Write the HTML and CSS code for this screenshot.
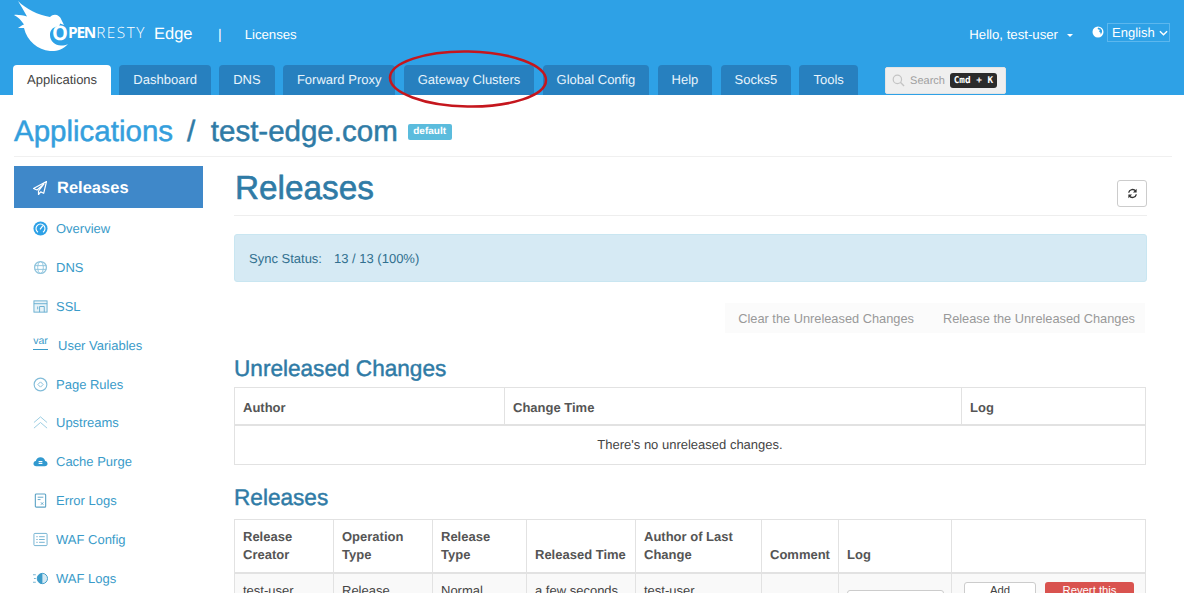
FILE: index.html
```html
<!DOCTYPE html>
<html lang="en">
<head>
<meta charset="utf-8">
<title>Releases - OpenResty Edge</title>
<link rel="stylesheet" href="styles.css">
</head>
<body>
<header class="topbar">
  <div class="brand-row">
    <a class="logo">
      <svg class="bird" viewBox="0 0 70 54" width="70" height="54" aria-hidden="true">
        <path fill="#fff" d="M18 1C26 9 38 15 50 17C54 13 60 15 61.500 20L64 25L60 23.500C60 25 59 26 58 26.500C52 27 50 31 50 35C50 41 55 45.500 61 45.500C64 45.500 66 45 68 44C63 50 56 51.500 50 51C38 50 27 41 24 28L18 28C21 26 22 25 24 24.500C21 20 18 17 14 15C18 14.500 23 15.500 27 16.500C24 11 21 6 18 1Z"/>
      </svg>
      <span class="logo-text"><b class="logo-o">O</b><b class="logo-pen">PEN</b><span class="logo-resty">RESTY</span></span>
      <span class="logo-edge">Edge</span>
    </a>
    <span class="divider">|</span>
    <a class="licenses">Licenses</a>
    <div class="user-area">
      <span class="hello">Hello, test-user</span>
      <span class="caret"></span>
      <svg class="globe" viewBox="0 0 12 12" width="12" height="12" aria-hidden="true">
        <circle cx="6" cy="6" r="5.500" fill="#fff"/>
        <path fill="#2ea1e6" d="M6.500 1.500C5.500 2 5.400 2.800 6 3.200C6.800 3.600 7.400 3.400 7.700 4C7.800 4.600 7 4.800 7.200 5.400C7.500 6 8.400 6.200 8.600 7C8.700 7.500 8.400 8 8.700 8.400C9.800 7.400 10.300 6 10 4.600C9.600 3 8.200 1.800 6.500 1.500Z"/>
      </svg>
      <span class="lang">English<svg class="chev" viewBox="0 0 10 6" width="9" height="6" aria-hidden="true"><path d="M1 1l4 4 4-4" fill="none" stroke="#fff" stroke-width="1.600"/></svg></span>
    </div>
  </div>
  <nav class="tabs">
    <a class="tab active">Applications</a>
    <a class="tab">Dashboard</a>
    <a class="tab">DNS</a>
    <a class="tab">Forward Proxy</a>
    <a class="tab">Gateway Clusters</a>
    <a class="tab">Global Config</a>
    <a class="tab">Help</a>
    <a class="tab">Socks5</a>
    <a class="tab">Tools</a>
    <div class="search">
      <svg viewBox="0 0 14 14" width="13" height="13" aria-hidden="true"><circle cx="5.800" cy="5.800" r="4.500" fill="none" stroke="#c4c4c4" stroke-width="1.300"/><path d="M9 9l4 4" stroke="#c4c4c4" stroke-width="1.500"/></svg>
      <span class="search-label">Search</span>
      <kbd class="shortcut">Cmd + K</kbd>
    </div>
  </nav>
</header>
<svg class="annotation" viewBox="0 0 170 64" width="170" height="64" aria-hidden="true">
  <ellipse cx="85" cy="32" rx="78" ry="27.500" fill="none" stroke="#c5161d" stroke-width="2.500" transform="rotate(1 85 32)"/>
</svg>

<div class="crumbs">
  <a class="crumb-root">Applications</a>
  <span class="crumb-sep">/</span>
  <a class="crumb-app">test-edge.com</a>
  <span class="badge">default</span>
</div>

<div class="layout">
  <aside class="sidebar">
    <a class="side-active">
      <svg viewBox="0 0 14 14" width="14" height="14" aria-hidden="true"><path d="M13.500.5L.5 7.500l3.500 1.500L11 3 5.500 10v3.500l2.200-2.600 3 1.400z" fill="none" stroke="#fff" stroke-width="1.200" stroke-linejoin="round"/></svg>
      <span>Releases</span>
    </a>
    <a class="side-item"><svg viewBox="0 0 16 16" width="15" height="15"><circle cx="8" cy="8" r="7.500" fill="#2ea1e6"/><path d="M5.300 12A4.800 4.800 0 1 1 10.700 12" fill="none" stroke="#fff" stroke-width="1.200"/><path d="M7.500 9l3-4" stroke="#fff" stroke-width="1.300"/></svg><span>Overview</span></a>
    <a class="side-item"><svg viewBox="0 0 16 16" width="15" height="15"><g fill="none" stroke="#8fc4dd"><circle cx="8" cy="8" r="6.300" stroke-width="1.400"/><ellipse cx="8" cy="8" rx="3" ry="6.300"/><path d="M1.800 6h12.400M1.800 10h12.400"/></g></svg><span>DNS</span></a>
    <a class="side-item"><svg viewBox="0 0 16 16" width="15" height="15"><g fill="none" stroke="#67aed0"><rect x="1" y="2" width="14" height="12" fill="#e8f3f8"/><path d="M1 5h14M7 14V8h5v6M5 8v3"/></g></svg><span>SSL</span></a>
    <a class="side-item var-item"><span class="var-icon">var</span><span>User Variables</span></a>
    <a class="side-item"><svg viewBox="0 0 16 16" width="15" height="15"><g fill="none" stroke="#80bbd8"><circle cx="8" cy="8" r="6.800" stroke-width="1.200"/><path d="M8 5.200L10.800 8 8 10.800 5.200 8z"/></g></svg><span>Page Rules</span></a>
    <a class="side-item"><svg viewBox="0 0 16 16" width="15" height="15"><path d="M1 8l7-6 7 6M1 14l7-6 7 6" fill="none" stroke="#94cae0" stroke-width="1"/></svg><span>Upstreams</span></a>
    <a class="side-item"><svg viewBox="0 0 16 16" width="15" height="15"><path fill="#3199cf" d="M3.500 13C1.500 13 .5 11.700.5 10.300.5 8.800 1.600 7.700 3 7.500 3.500 5 5.500 3.500 8 3.500s4.500 1.500 5 4c1.400.2 2.500 1.300 2.500 2.800 0 1.400-1 2.700-3 2.700z"/><path d="M6 8h4M6 10h4" stroke="#fff" stroke-width="1.200"/></svg><span>Cache Purge</span></a>
    <a class="side-item"><svg viewBox="0 0 16 16" width="15" height="15"><g fill="none" stroke="#5ea4c6"><rect x="2.500" y="1" width="11" height="14" rx="1" stroke-width="1.200"/><path d="M5 4.500h6M5 7h3M8.500 10l2.500 2.500M11 10l-2.500 2.500"/></g></svg><span>Error Logs</span></a>
    <a class="side-item"><svg viewBox="0 0 16 16" width="15" height="15"><g fill="none" stroke="#6fb0d0"><rect x="1" y="1.500" width="14" height="13" rx="1"/><path d="M3.500 5h1.500M6.500 5h6M3.500 8h1.500M6.500 8h6M3.500 11h1.500M6.500 11h6"/></g></svg><span>WAF Config</span></a>
    <a class="side-item"><svg viewBox="0 0 16 16" width="15" height="15"><path d="M0 4h3M1 8h2M0 12h3" stroke="#6fb0d0"/><circle cx="10" cy="8" r="5.500" fill="#d4e9f3" stroke="#3b9bc9"/><path d="M10 2.500a5.500 5.500 0 0 0 0 11z" fill="#3b9bc9"/></svg><span>WAF Logs</span></a>
  </aside>

  <main class="content">
    <div class="page-head">
      <h1 class="page-title">Releases</h1>
      <button class="refresh" type="button" aria-label="Refresh">
        <svg viewBox="0 0 12 12" width="11" height="11"><g fill="none" stroke="#333" stroke-width="1.500"><path d="M1.800 5A4.300 4.300 0 0 1 9.500 3.500"/><path d="M10.200 7A4.300 4.300 0 0 1 2.500 8.500"/></g><path fill="#333" d="M10.500.8v4h-4zM1.500 11.200v-4h4z"/></svg>
      </button>
    </div>

    <div class="sync"><span class="sync-label">Sync Status:</span><span>13 / 13 (100%)</span></div>

    <div class="actions">
      <button class="ghost ghost-clear" type="button">Clear the Unreleased Changes</button>
      <button class="ghost ghost-release" type="button">Release the Unreleased Changes</button>
    </div>

    <h2 class="section-first">Unreleased Changes</h2>
    <table class="data grid-a">
      <thead><tr><th class="a1">Author</th><th class="a2">Change Time</th><th>Log</th></tr></thead>
      <tbody><tr><td colspan="3" class="empty">There's no unreleased changes.</td></tr></tbody>
    </table>

    <h2 class="section-next">Releases</h2>
    <table class="data grid-b">
      <thead>
        <tr>
          <th class="b1">Release<br>Creator</th>
          <th class="b2">Operation<br>Type</th>
          <th class="b3">Release<br>Type</th>
          <th class="b4">Released Time</th>
          <th class="b5">Author of Last<br>Change</th>
          <th class="b6">Comment</th>
          <th class="b7">Log</th>
          <th></th>
        </tr>
      </thead>
      <tbody>
        <tr class="stripe">
          <td>test-user</td>
          <td>Release</td>
          <td>Normal</td>
          <td>a few seconds</td>
          <td>test-user</td>
          <td></td>
          <td><button class="btn-log" type="button" aria-label="Log"></button></td>
          <td class="row-btns"><button class="btn-add" type="button">Add</button><button class="btn-revert" type="button">Revert this</button></td>
        </tr>
      </tbody>
    </table>
  </main>
</div>
</body>
</html>
```
FILE: styles.css
```css
* { box-sizing: border-box; }
html, body { margin: 0; height: 593px; overflow: hidden; background: #fff; }
body {
  position: relative;
  font-family: "Liberation Sans", Arial, sans-serif;
  font-size: 13px;
  color: #444;
  text-rendering: geometricPrecision;
}

.topbar { height: 95px; background: #2ea1e6; padding: 0 14px 0 13px; display: flex; flex-direction: column; justify-content: space-between; color: #fff; }
.brand-row { display: flex; align-items: flex-start; height: 65px; }
.logo { display: flex; position: relative; width: 193px; flex: none; margin-left: -13px; }
.bird { display: block; flex: none; }
.logo-text { position: absolute; left: 52px; top: 22px; font-family: "Open Sans", sans-serif; font-size: 15.400px; line-height: 22px; white-space: nowrap; }
.logo-o { font-size: 20px; font-weight: 700; vertical-align: -2px; letter-spacing: 0; }
.logo-pen { font-weight: 700; letter-spacing: -1.200px; }
.logo-resty { font-weight: 300; letter-spacing: 1.500px; margin-left: 1px; }
.logo-edge { position: absolute; left: 154px; top: 24px; font-size: 16.500px; line-height: 20px; }
.divider { margin: 25px 0 0 25px; font-size: 14px; line-height: 18px; }
.licenses { margin: 26px 0 0 23px; font-size: 13.200px; line-height: 17px; }
.user-area { margin-left: auto; display: flex; align-items: flex-start; position: relative; }
.hello { margin-top: 26px; font-size: 13.200px; line-height: 17px; }
.caret { margin: 34px 0 0 9px; border: 3px solid transparent; border-top-color: #fff; border-bottom: 0; width: 0; height: 0; border-left-width: 3.500px; border-right-width: 3.500px; }
.globe { margin: 26px 0 0 19px; }
.lang { margin: 23px 0 0 3px; height: 19px; width: 63px; border: 1px solid #5cb7ee; font-size: 13px; line-height: 17px; padding-left: 4px; display: flex; align-items: center; gap: 4px; }

.tabs { display: flex; align-items: flex-end; height: 30px; gap: 8.250px; }
.tab { height: 30px; padding: 0 14px; line-height: 29px; border-radius: 4px 4px 0 0; background: #2780bf; color: #e8f4fc; white-space: nowrap; }
.tab.active { background: #fff; color: #444; }
.search { margin: 0 0 1px 19px; width: 121px; height: 27px; border-radius: 2px; background: #efefef; border: 1px solid #e4e4e4; display: flex; align-items: center; padding-left: 6px; color: #a0a0a0; font-size: 11px; }
.search svg { flex: none; }
.search-label { margin-left: 5px; }
.shortcut { margin-left: 5px; height: 15px; width: 47px; text-align: center; background: #2b2b2b; color: #fff; border-radius: 3px; font-family: "DejaVu Sans Mono", monospace; font-weight: 700; font-size: 9.400px; line-height: 15px; }

.annotation { position: absolute; left: 383px; top: 47px; }

.crumbs { margin: 0 12px 0 14px; height: 62px; border-bottom: 1px solid #f0f0f0; display: flex; align-items: center; font-size: 29.500px; -webkit-text-stroke: .5px currentColor; padding-top: 12px; }
.crumb-root { color: #349fdd; }
.crumb-sep { color: #2f7ba6; margin: 0 15.500px 0 14px; }
.crumb-app { color: #2f7ba6; }
.badge { margin: 0 0 0 10px; height: 16px; padding: 0 5.500px; background: #5bbcdd; color: #fff; font-size: 10px; font-weight: 700; line-height: 15px; border-radius: 2px; -webkit-text-stroke: 0; }

.layout { display: flex; padding: 9px 37px 0 14px; }
.sidebar { width: 189px; flex: none; display: flex; flex-direction: column; }
.side-active { height: 42px; background: #3f88c9; color: #fff; display: flex; align-items: center; padding: 2px 0 0 19px; gap: 10px; font-size: 16.500px; font-weight: 700; margin-bottom: 1px; }
.side-item { height: 38.900px; display: flex; align-items: center; padding-left: 19px; gap: 8px; color: #3a9bc9; flex: none; }
.side-item svg { flex: none; }
.var-item { gap: 10px; }
.var-icon { width: 15px; font-size: 10.500px; line-height: 10px; border-bottom: 1px solid #3a9bc9; padding-bottom: 3px; margin-top: -5px; text-align: center; }

.content { margin-left: 31px; width: 913px; flex: none; }
.page-head { height: 50px; border-bottom: 1px solid #eee; display: flex; justify-content: space-between; align-items: flex-start; }
.page-title { margin: 0; padding-left: 1px; font-size: 33.300px; line-height: 46px; font-weight: 400; color: #2f7ba6; -webkit-text-stroke: .6px #2f7ba6; }
.refresh { margin-top: 14px; width: 30px; height: 27px; padding: 0; background: #fff; border: 1px solid #ccc; border-radius: 3px; display: flex; align-items: center; justify-content: center; }

.sync { margin-top: 18px; height: 48px; border: 1px solid #c9e6f1; border-radius: 3px; background: #d6eaf4; color: #31708f; display: flex; align-items: center; padding-left: 14px; }
.sync-label { margin-right: 12px; }

.actions { margin-top: 21px; display: flex; justify-content: flex-end; margin-right: 2px; }
.ghost { height: 30px; border: 0; background: #fbfbfb; color: #999; font: inherit; font-size: 12.800px; }
.ghost-clear { padding: 0 14px 0 13px; }
.ghost-release { padding: 0 10px 0 15px; }

h2 { margin: 0; font-size: 22.600px; font-weight: 400; line-height: 28px; color: #2f7ba6; -webkit-text-stroke: .45px #2f7ba6; }
.section-first { margin-top: 22px; }
.section-next { margin-top: 19px; }

.data { border-collapse: collapse; table-layout: fixed; width: 912px; }
.data th, .data td { border: 1px solid #e2e2e2; padding: 0 8px; text-align: left; vertical-align: bottom; line-height: 18.500px; }
.data th { font-weight: 700; color: #555; border-bottom-width: 2px; white-space: nowrap; }
.grid-a { margin-top: 4px; }
.grid-a th { height: 37px; padding-bottom: 6px; }
.grid-a .a1 { width: 270px; }
.grid-a .a2 { width: 457px; }
.data .empty { height: 40px; padding-top: 1px; text-align: center; vertical-align: middle; }
.grid-b { margin-top: 7px; }
.grid-b th { height: 53px; padding-bottom: 7px; }
.b1 { width: 99px; }
.b2 { width: 99px; }
.b3 { width: 94px; }
.b4 { width: 109px; }
.b5 { width: 126px; }
.b6 { width: 77px; }
.b7 { width: 113px; }
.stripe td { background: #f9f9f9; vertical-align: top; padding-top: 8px; height: 60px; }
.btn-log { margin-top: 8px; width: 97px; height: 24px; background: #fff; border: 1px solid #ccc; border-radius: 3px; }
.stripe .row-btns { padding: 8px 0 0 12px; }
.btn-add { width: 72px; height: 40px; background: #fff; border: 1px solid #ccc; border-radius: 3px; font: inherit; font-size: 11.300px; line-height: 15px; color: #444; padding: 0; vertical-align: top; display: inline-flex; justify-content: center; }
.btn-revert { margin-left: 9px; width: 89px; height: 40px; background: #d9534f; border: 0; border-radius: 3px; font: inherit; font-size: 11.300px; line-height: 15px; color: #fff; padding: 1px 0 0; vertical-align: top; display: inline-flex; justify-content: center; }
```
